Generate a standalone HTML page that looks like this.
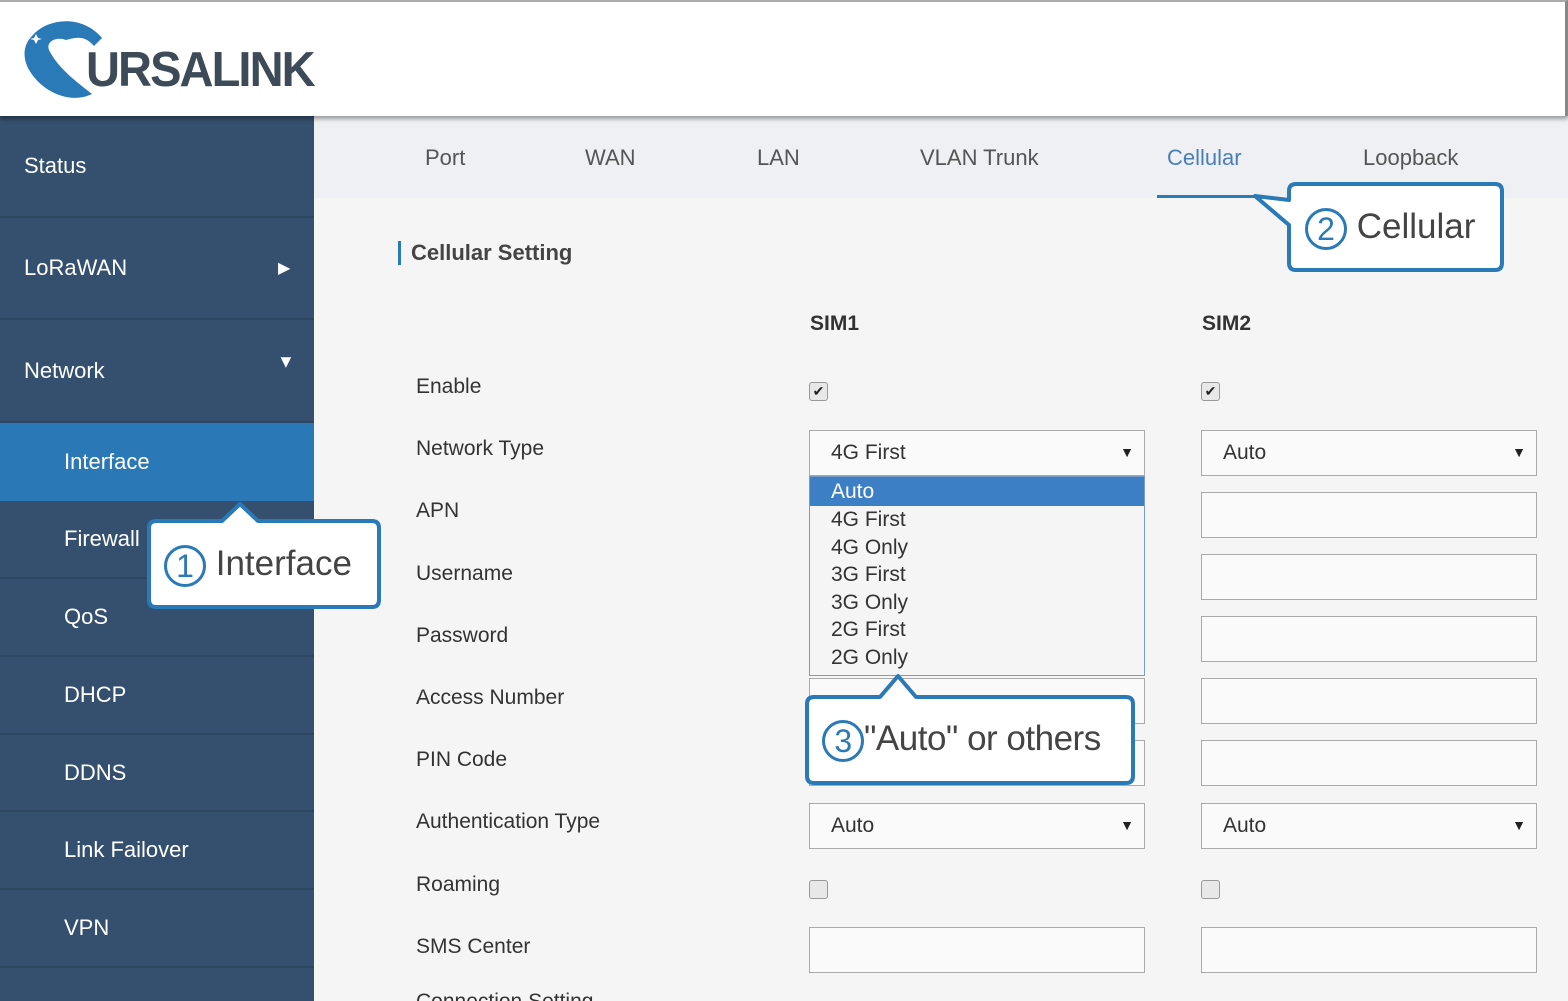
<!DOCTYPE html>
<html><head><meta charset="utf-8">
<style>
*{margin:0;padding:0;box-sizing:border-box}
html{width:1568px;height:1001px;overflow:hidden}
body{width:1568px;height:1001px;overflow:hidden;background:#f5f5f5;font-family:"Liberation Sans",sans-serif;position:relative}
.abs{position:absolute}
#hdr{left:0;top:0;width:1568px;height:116px;background:#fff;border-top:2px solid #aaa;border-right:3px solid #888;box-shadow:0 3px 4px rgba(0,0,0,.35);z-index:3}
#side{left:0;top:116px;width:314px;height:885px;background:#34506e}
.si{position:absolute;left:0;width:314px;color:#fff;font-size:22px;border-bottom:2px solid #2d4763}
.si span{position:absolute;top:50%;transform:translateY(-50%)}
#tabs{left:314px;top:116px;width:1254px;height:82px;background:#eef0f3}
.tab{position:absolute;top:145px;font-size:22px;color:#555}
.lbl{position:absolute;left:416px;font-size:21px;color:#333}
.inp{position:absolute;height:46px;width:336px;border:1px solid #aaa;background:#fafafa}
.sel{font-size:21px;color:#333;padding:10px 0 0 21px}
.sel:after{content:"▼";position:absolute;right:10px;top:13px;font-size:14px;color:#222}
.cb{position:absolute;width:19px;height:19px;border:1px solid #999;border-radius:3px;background:#e8e8e8;font-size:14px;line-height:17px;text-align:center;color:#222}
.co{position:absolute;font-size:35px;color:#444;z-index:6}
.num{display:inline-block;width:42px;height:42px;border:3px solid #2a7ab8;border-radius:50%;color:#2a7ab8;font-size:32px;line-height:36px;text-align:center;vertical-align:middle}
</style></head><body>
<div id="hdr" class="abs">
<svg class="abs" style="left:22px;top:14px" width="80" height="86" viewBox="0 0 80 86">
<path d="M10 20 C25 2 60 -2 80 22 L72 30 C62 18 52 22 44 24 C34 20 22 26 28 36 C38 54 55 66 70 78 C50 88 20 78 6 52 C0 40 2 28 10 20Z" fill="#2a7ab8"/>
<path d="M14 18 l2 4 4 1 -4 1 -2 4 -2 -4 -4 -1 4 -1z" fill="#fff"/>
</svg>
<div class="abs" style="left:86px;top:40px;font-size:49px;font-weight:bold;color:#3d4a57;letter-spacing:-2px;transform:scaleX(0.96);transform-origin:left">URSALINK</div>
</div>
<div id="side" class="abs">
<div class="si" style="top:0;height:102px"><span style="left:24px">Status</span></div>
<div class="si" style="top:102px;height:102px"><span style="left:24px">LoRaWAN</span><span style="left:278px;font-size:16px">▶</span></div>
<div class="si" style="top:204px;height:103px"><span style="left:24px">Network</span><span style="left:277px;top:42%;font-size:18px">▼</span></div>
<div class="si" style="top:307px;height:78px;background:#2a78b6;border:none"><span style="left:64px">Interface</span></div>
<div class="si" style="top:385px;height:78px"><span style="left:64px">Firewall</span></div>
<div class="si" style="top:463px;height:78px"><span style="left:64px">QoS</span></div>
<div class="si" style="top:541px;height:78px"><span style="left:64px">DHCP</span></div>
<div class="si" style="top:619px;height:77px"><span style="left:64px">DDNS</span></div>
<div class="si" style="top:696px;height:78px"><span style="left:64px">Link Failover</span></div>
<div class="si" style="top:774px;height:78px"><span style="left:64px">VPN</span></div>
</div>
<div id="tabs" class="abs"></div>
<div class="tab" style="left:425px">Port</div>
<div class="tab" style="left:585px">WAN</div>
<div class="tab" style="left:757px">LAN</div>
<div class="tab" style="left:920px">VLAN Trunk</div>
<div class="tab" style="left:1167px;color:#4a7fb5">Cellular</div>
<div class="tab" style="left:1363px">Loopback</div>
<div class="abs" style="left:1157px;top:195px;width:100px;height:3px;background:#2a7ab8"></div>
<div class="abs" style="left:398px;top:241px;width:3px;height:24px;background:#2a7ab8"></div>
<div class="abs" style="left:411px;top:240px;font-size:22px;font-weight:bold;color:#444">Cellular Setting</div>
<div class="abs" style="left:810px;top:312px;font-size:21px;font-weight:bold;color:#333">SIM1</div>
<div class="abs" style="left:1202px;top:312px;font-size:21px;font-weight:bold;color:#333">SIM2</div>
<div class="lbl" style="top:375px">Enable</div>
<div class="lbl" style="top:437px">Network Type</div>
<div class="lbl" style="top:499px">APN</div>
<div class="lbl" style="top:562px">Username</div>
<div class="lbl" style="top:624px">Password</div>
<div class="lbl" style="top:686px">Access Number</div>
<div class="lbl" style="top:748px">PIN Code</div>
<div class="lbl" style="top:810px">Authentication Type</div>
<div class="lbl" style="top:873px">Roaming</div>
<div class="lbl" style="top:935px">SMS Center</div>
<div class="lbl" style="top:990px;height:11px;overflow:hidden">Connection Setting</div>
<div class="cb" style="left:809px;top:382px">✔</div>
<div class="cb" style="left:1201px;top:382px">✔</div>
<div class="cb" style="left:809px;top:880px"></div>
<div class="cb" style="left:1201px;top:880px"></div>
<div class="inp sel" style="left:809px;top:430px">4G First</div>
<div class="inp sel" style="left:1201px;top:430px">Auto</div>
<div class="inp" style="left:1201px;top:492px"></div>
<div class="inp" style="left:1201px;top:554px"></div>
<div class="inp" style="left:1201px;top:616px"></div>
<div class="inp" style="left:1201px;top:678px"></div>
<div class="inp" style="left:1201px;top:740px"></div>
<div class="inp" style="left:809px;top:678px"></div>
<div class="inp" style="left:809px;top:740px"></div>
<div class="inp sel" style="left:809px;top:803px">Auto</div>
<div class="inp sel" style="left:1201px;top:803px">Auto</div>
<div class="inp" style="left:809px;top:927px"></div>
<div class="inp" style="left:1201px;top:927px"></div>
<div class="abs" style="left:809px;top:476px;width:336px;height:200px;background:#f5f5f5;border:1px solid #7a9cc0;font-size:21px;color:#333;line-height:27.6px;z-index:4">
<div style="background:#3d7fc4;color:#fff;padding-left:21px;height:29px;line-height:29px">Auto</div>
<div style="padding-left:21px">4G First<br>4G Only<br>3G First<br>3G Only<br>2G First<br>2G Only</div>
</div>
<svg class="abs" style="left:0;top:0;z-index:5" width="1568" height="1001">
<g fill="#fff" stroke="#2a7ab8" stroke-width="4" stroke-linejoin="round">
<path d="M156 521 H222 L240 504 L258 521 H372 Q379 521 379 528 V600 Q379 607 372 607 H156 Q149 607 149 600 V528 Q149 521 156 521Z"/>
<path d="M1296 184 H1495 Q1502 184 1502 191 V263 Q1502 270 1495 270 H1296 Q1289 270 1289 263 V225 L1255 196 L1289 200 V191 Q1289 184 1296 184Z"/>
<path d="M814 697 H880 L898 676 L916 697 H1126 Q1133 697 1133 704 V776 Q1133 783 1126 783 H814 Q807 783 807 776 V704 Q807 697 814 697Z"/>
</g></svg>
<div class="co" style="left:164px;top:544px"><span class="num">1</span> Interface</div>
<div class="co" style="left:1305px;top:207px"><span class="num">2</span>&nbsp;Cellular</div>
<div class="co" style="left:822px;top:719px;letter-spacing:-0.5px"><span class="num">3</span>"Auto" or others</div>
</body></html>
